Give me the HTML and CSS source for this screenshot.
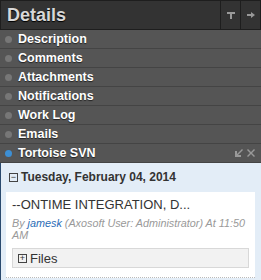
FILE: index.html
```html
<!DOCTYPE html>
<html lang="en">
<head>
  <meta charset="UTF-8" />
  <title>Details</title>
  <link rel="stylesheet" href="styles.css">
</head>
<body>
  <div class="panel">
    <div class="header">
      <h1>Details</h1>
      <span class="hbtn">
        <svg width="8" height="8" viewBox="0 0 8 8"><path d="M0 1h8v2H5v5H3V3H0z" fill="#999"/></svg>
      </span>
      <span class="hbtn">
        <svg width="8" height="8" viewBox="0 0 8 8"><path d="M0 3h4V1l4 3-4 3V5H0z" fill="#999"/></svg>
      </span>
    </div>

    <ul class="tabs">
      <li><span class="dot"></span>Description</li>
      <li><span class="dot"></span>Comments</li>
      <li><span class="dot"></span>Attachments</li>
      <li><span class="dot"></span>Notifications</li>
      <li><span class="dot"></span>Work Log</li>
      <li><span class="dot"></span>Emails</li>
      <li class="active"><span class="dot"></span>Tortoise SVN
        <span class="tools">
          <svg width="8" height="8" viewBox="0 0 8 8"><path d="M8 1L7 0 2 5V2H0v6h6V6H3z" fill="#999"/></svg>
          <svg width="8" height="8" viewBox="0 0 8 8"><path d="M1 0l3 3 3-3 1 1-3 3 3 3-1 1-3-3-3 3-1-1 3-3-3-3z" fill="#999"/></svg>
        </span>
      </li>
    </ul>

    <div class="content">
      <div class="day"><span class="box">&minus;</span>Tuesday, February 04, 2014</div>
      <div class="entry">
        <div class="subject">--ONTIME INTEGRATION, D...</div>
        <div class="meta">By <a href="#">jamesk</a> (Axosoft User: Administrator) At 11:50 AM</div>
        <div class="files"><span class="box">+</span>Files</div>
      </div>
    </div>
  </div>
</body>
</html>
```

FILE: styles.css
```css
* {
  margin: 0;
  padding: 0;
  box-sizing: border-box;
}
body {
  font-family: "Liberation Sans", Arial, sans-serif;
  background: #e3edf7;
  overflow: hidden;
}
.panel {
  width: 261px;
  height: 280px;
  display: flex;
  flex-direction: column;
}
.header {
  height: 30px;
  background: #333333;
  border: 1px solid #1e1e1e;
  display: flex;
  align-items: stretch;
}
.header h1 {
  flex: 1;
  font-size: 18px;
  font-weight: bold;
  color: #d8d8d8;
  padding-left: 6px;
  line-height: 28px;
  text-shadow: 0 1px 1px #000;
}
.hbtn {
  width: 20px;
  border-left: 1px solid #1e1e1e;
  display: flex;
  align-items: center;
  justify-content: center;
}
.tabs {
  list-style: none;
  background: #555555;
}
.tabs li {
  height: 19px;
  border-bottom: 1px solid #444444;
  display: flex;
  align-items: center;
  color: #ffffff;
  font-size: 12.5px;
  font-weight: bold;
  text-shadow: 0 1px 1px #222;
}
.dot {
  width: 7px;
  height: 7px;
  border-radius: 50%;
  background: #777777;
  margin: 0 6px 0 5px;
}
.active .dot {
  background: #3d8fd4;
}
.tools {
  margin-left: auto;
  margin-right: 6px;
  display: flex;
  gap: 4px;
}
.content {
  flex: 1;
  border-left: 1px solid #2a4a6e;
  padding: 4px 6px 0 5px;
}
.day {
  font-size: 12px;
  font-weight: bold;
  color: #333333;
  display: flex;
  align-items: center;
  height: 20px;
  padding-left: 3px;
}
.box {
  width: 9px;
  height: 9px;
  border: 1px solid #444;
  font-size: 9px;
  line-height: 7px;
  text-align: center;
  font-weight: normal;
  margin-right: 3px;
  color: #333;
}
.entry {
  background: #ffffff;
  margin-top: 5px;
  padding: 4px 5px 9px 6px;
  border-bottom: 1px dotted #bbbbbb;
}
.subject {
  font-size: 13px;
  color: #333333;
  line-height: 17px;
}
.meta {
  font-size: 10.8px;
  font-style: italic;
  color: #999999;
  line-height: 12px;
  margin-top: 4px;
}
.meta a {
  color: #2a6db6;
  text-decoration: none;
}
.files {
  margin-top: 7px;
  margin-right: 1px;
  background: #f2f2f2;
  border: 1px solid #d8d8d8;
  height: 20px;
  display: flex;
  align-items: center;
  padding-left: 5px;
  font-size: 13px;
  color: #333;
}
```
